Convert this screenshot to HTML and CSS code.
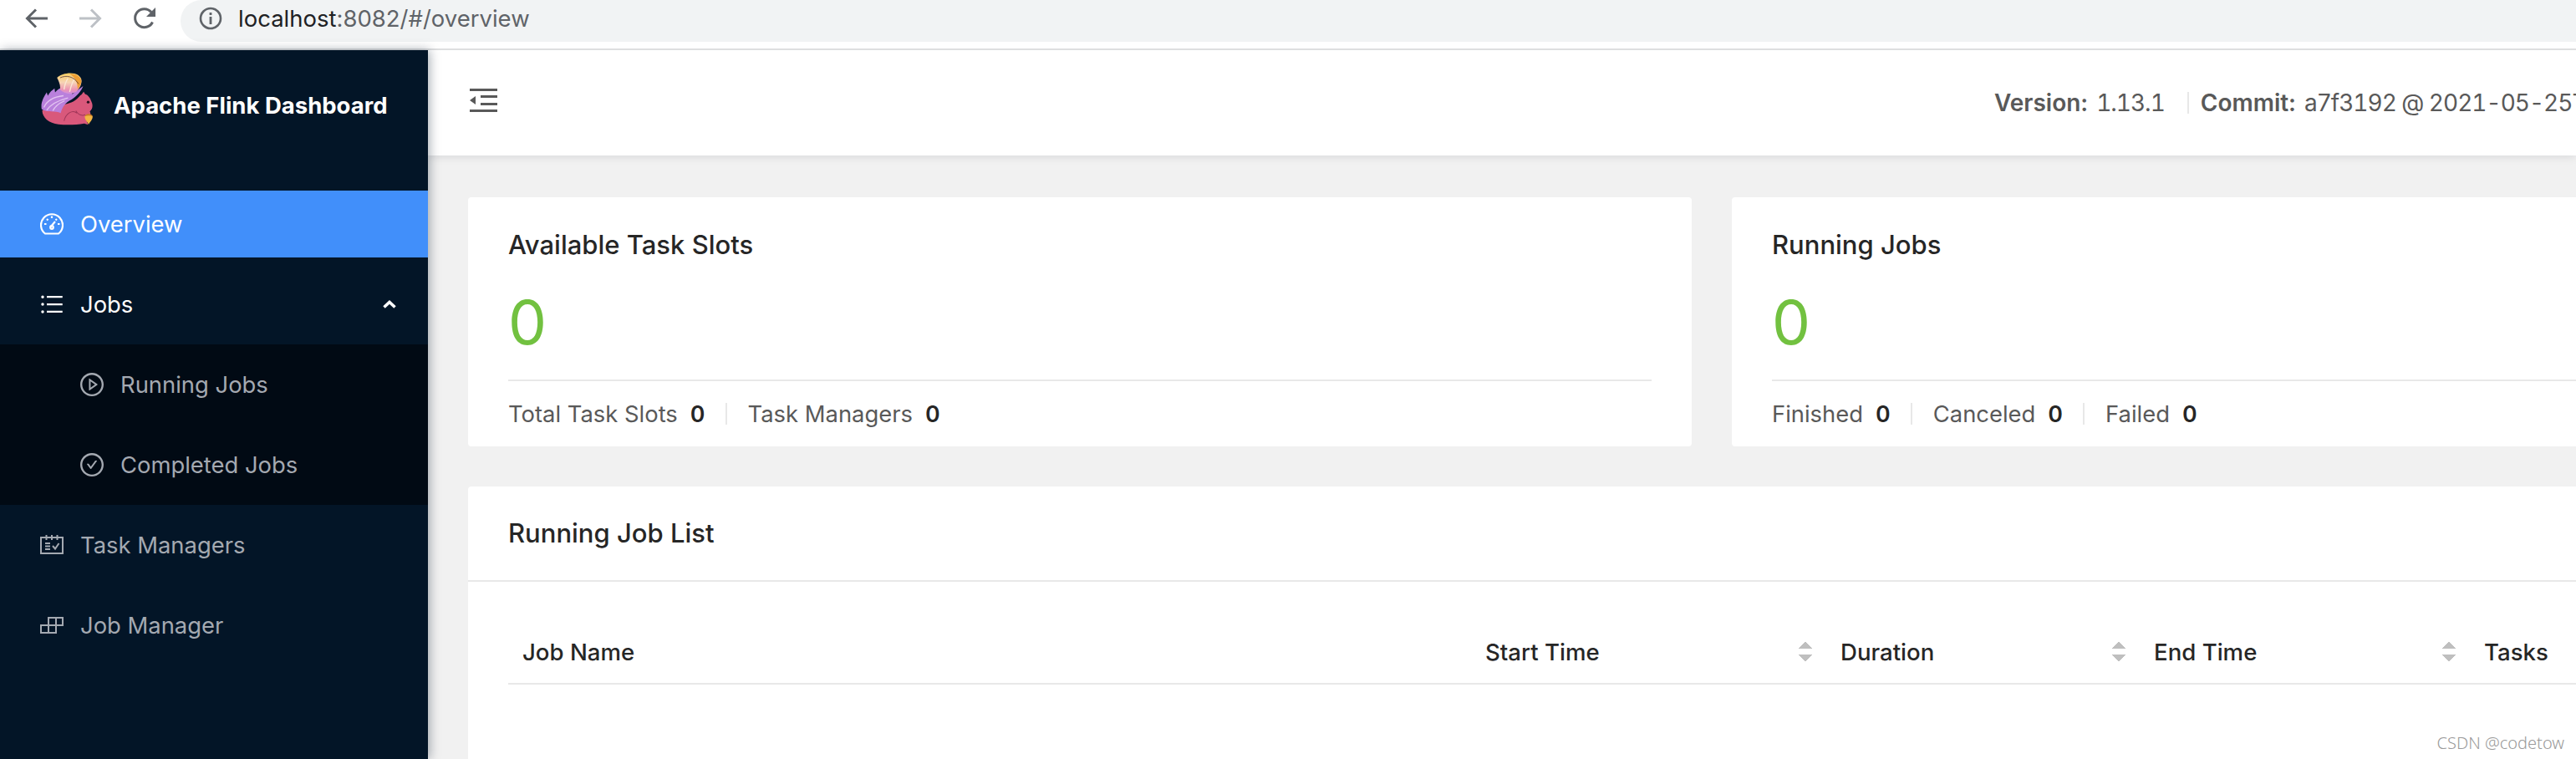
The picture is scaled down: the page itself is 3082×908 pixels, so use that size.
FILE: index.html
```html
<!DOCTYPE html>
<html lang="en">
<head>
<meta charset="utf-8">
<title>Apache Flink Dashboard</title>
<link rel="stylesheet" href="styles.css">
</head>
<body>
<div class="browser-bar">
  <svg class="nav-btn" width="28" height="28" viewBox="0 0 28 28"><path class="chrome-stroke" d="M27 14H3M13 3.500L2.500 14 13 24.500"/></svg>
  <svg class="nav-btn fwd" width="28" height="28" viewBox="0 0 28 28"><path class="chrome-stroke dim" d="M1 14H25M15 3.500L25.500 14 15 24.500"/></svg>
  <svg class="nav-btn reload" width="28" height="28" viewBox="0 0 28 28"><path class="chrome-stroke" d="M23.500 18.500A11 11 0 1 1 22 6.500"/><path class="chrome-fill" d="M27 1V12H16Z"/></svg>
  <div class="address">
    <svg width="28" height="28" viewBox="0 0 28 28"><circle cx="14" cy="14" r="12" fill="none" stroke="#5f6368" stroke-width="2.600"/><rect x="12.600" y="12" width="2.800" height="9" fill="#5f6368"/><rect x="12.600" y="7" width="2.800" height="3" fill="#5f6368"/></svg>
    <span class="url"><span class="host">localhost</span>:8082/#/overview</span>
  </div>
</div>
<div class="app">
  <aside class="sidebar">
    <div class="brand">
      <svg class="logo" width="62" height="63" viewBox="88 52 184 188">
        <defs>
          <linearGradient id="plume" x1="0" y1="0" x2="0" y2="1">
            <stop offset="0" stop-color="#f8cf62"/><stop offset=".45" stop-color="#f6d3b4"/><stop offset=".8" stop-color="#ec93b2"/><stop offset="1" stop-color="#cf8fe0"/>
          </linearGradient>
        </defs>
        <path fill="#d9587b" d="M92 186C92 212 116 232 150 236C180 240 215 238 242 233L256 238L250 222C262 214 268 200 262 190C272 182 274 168 268 156C264 142 254 130 245 128L240 120L232 130C222 136 216 150 196 158C160 170 120 176 92 186Z"/>
        <path fill="#b980dc" d="M90 182C86 160 96 140 108 122L112 134C118 122 128 114 136 108L138 122C146 112 156 106 164 104L200 128L238 100C232 118 214 138 196 148C176 158 164 172 158 196C140 186 108 196 90 182Z"/>
        <path fill="url(#plume)" d="M156 112C158 96 150 80 145 70C160 54 200 48 220 60C228 66 234 74 232 84C232 96 224 110 214 120C196 132 170 128 156 112Z"/>
        <path fill="#ee9f35" d="M190 56C210 54 232 66 232 84C230 96 224 104 218 112C220 90 210 70 190 56Z"/>
        <path fill="none" stroke="#e3c4f2" stroke-width="4" d="M98 176C108 152 132 138 168 134M108 186C122 164 146 152 184 142M130 188C136 174 150 162 172 152"/>
        <path fill="none" stroke="#fbe6d4" stroke-width="4" d="M170 112C172 96 176 84 184 72M190 120C194 102 198 88 206 76"/>
        <path fill="none" stroke="#3a1d2e" stroke-width="2" d="M156 70C178 60 204 64 222 92"/>
        <path fill="none" stroke="#9e3658" stroke-width="3" d="M212 188C222 204 236 206 246 202M170 224C176 198 200 182 216 196"/>
        <circle cx="256" cy="157" r="5" fill="#2a1020"/>
        <path fill="#f3b545" d="M244 208C248 198 268 198 272 208C272 220 264 226 258 236C252 226 244 220 244 208Z"/>
        <path fill="#c97a22" d="M244 208C248 196 268 196 272 208C264 204 252 204 244 208Z"/>
      </svg>
      <span class="brand-name">Apache Flink Dashboard</span>
    </div>
    <nav class="menu">
      <a class="item active">
        <svg class="ico" width="28" height="28" viewBox="0 0 28 28" fill="none" stroke="currentColor" stroke-width="2.200"><path d="M6 25.500H22A13 13 0 1 0 6 25.500Z"/><path d="M14 4.500V7M5 14H7.500M21 14H23.500M8 8L9.500 9.500M20 8L18.500 9.500M12.500 17.500L18 11"/><circle cx="14" cy="18" r="1.800"/></svg>
        <span>Overview</span>
      </a>
      <div class="group">
        <a class="item open">
          <svg class="ico" width="28" height="28" viewBox="64 64 896 896" fill="currentColor"><path d="M912 192H328c-4.400 0-8 3.600-8 8v56c0 4.400 3.600 8 8 8h584c4.400 0 8-3.600 8-8v-56c0-4.400-3.600-8-8-8zm0 284H328c-4.400 0-8 3.600-8 8v56c0 4.400 3.600 8 8 8h584c4.400 0 8-3.600 8-8v-56c0-4.400-3.600-8-8-8zm0 284H328c-4.400 0-8 3.600-8 8v56c0 4.400 3.600 8 8 8h584c4.400 0 8-3.600 8-8v-56c0-4.400-3.600-8-8-8zM104 228a56 56 0 1 0 112 0 56 56 0 1 0-112 0zm0 284a56 56 0 1 0 112 0 56 56 0 1 0-112 0zm0 284a56 56 0 1 0 112 0 56 56 0 1 0-112 0z"/></svg>
          <span>Jobs</span>
          <svg class="chev" width="18" height="12" viewBox="0 0 18 12"><path d="M2.500 9.500L9 3.500L15.500 9.500" fill="none" stroke="#fff" stroke-width="3.600"/></svg>
        </a>
        <div class="sub">
          <a class="item subitem">
            <svg class="ico" width="28" height="28" viewBox="64 64 896 896" fill="currentColor"><path d="M512 64C264.600 64 64 264.600 64 512s200.600 448 448 448 448-200.600 448-448S759.400 64 512 64zm0 820c-205.400 0-372-166.600-372-372s166.600-372 372-372 372 166.600 372 372-166.600 372-372 372z"/><path d="M719.400 499.100l-296.100-215A15.900 15.900 0 0 0 398 297v430c0 13.100 14.800 20.500 25.300 12.900l296.100-215a15.900 15.900 0 0 0 0-25.800zm-257.600 134V390.900L628.500 512 461.800 633.100z"/></svg>
            <span>Running Jobs</span>
          </a>
          <a class="item subitem">
            <svg class="ico" width="28" height="28" viewBox="64 64 896 896" fill="currentColor"><path d="M699 353h-46.900c-10.200 0-19.900 4.900-25.900 13.300L469 584.300l-71.200-98.800c-6-8.300-15.600-13.300-25.900-13.300H325c-6.500 0-10.300 7.400-6.500 12.700l124.600 172.800a31.800 31.800 0 0 0 51.700 0l210.600-292c3.900-5.300.1-12.700-6.400-12.700z"/><path d="M512 64C264.600 64 64 264.600 64 512s200.600 448 448 448 448-200.600 448-448S759.400 64 512 64zm0 820c-205.400 0-372-166.600-372-372s166.600-372 372-372 372 166.600 372 372-166.600 372-372 372z"/></svg>
            <span>Completed Jobs</span>
          </a>
        </div>
      </div>
      <a class="item">
        <svg class="ico" width="28" height="28" viewBox="0 0 28 28" fill="none" stroke="currentColor" stroke-width="2"><path d="M1 5H27V24H1Z"/><path d="M7.500 2V8M14 2V8M20.500 2V8M6 12H12M6 15.500H12M6 19H12M15 15L18 18.500L22.500 12"/></svg>
        <span>Task Managers</span>
      </a>
      <a class="item">
        <svg class="ico" width="28" height="28" viewBox="0 0 28 28" fill="none" stroke="currentColor" stroke-width="2"><path d="M1 14H19V23H1ZM10 14V23M10 14V5H27V14H19V5"/></svg>
        <span>Job Manager</span>
      </a>
    </nav>
  </aside>
  <main class="main">
    <header class="topbar">
      <svg class="toggle" width="33" height="28" viewBox="0 0 33 28"><path fill="#595959" d="M0 0H33V3H0ZM13 8H33V11H13ZM13 17H33V20H13ZM0 25H33V28H0ZM0 14L7 9V19Z"/></svg>
      <div class="meta">
        <span class="meta-item"><b>Version:</b> <span class="val">1.13.1</span></span>
        <i class="meta-sep"></i>
        <span class="meta-item"><b>Commit:</b> <span class="val">a7f3192 @ 2021-05-25T</span></span>
      </div>
    </header>
    <div class="content">
      <section class="card stat">
        <h2 class="stat-title">Available Task Slots</h2>
        <div class="stat-value">0</div>
        <div class="stat-foot">
          <span class="foot-item">Total Task Slots<b>0</b></span>
          <i class="foot-sep"></i>
          <span class="foot-item">Task Managers<b>0</b></span>
        </div>
      </section>
      <section class="card stat">
        <h2 class="stat-title">Running Jobs</h2>
        <div class="stat-value">0</div>
        <div class="stat-foot">
          <span class="foot-item">Finished<b>0</b></span>
          <i class="foot-sep"></i>
          <span class="foot-item">Canceled<b>0</b></span>
          <i class="foot-sep"></i>
          <span class="foot-item">Failed<b>0</b></span>
        </div>
      </section>
      <section class="card list">
        <h2 class="list-title">Running Job List</h2>
        <div class="list-body">
          <table class="jobs">
            <colgroup><col class="c-name"><col class="c-start"><col class="c-dur"><col class="c-end"><col class="c-tasks"></colgroup>
            <thead>
              <tr>
                <th>Job Name</th>
                <th><div class="th-in">Start Time<span class="sorter"></span></div></th>
                <th><div class="th-in">Duration<span class="sorter"></span></div></th>
                <th><div class="th-in">End Time<span class="sorter"></span></div></th>
                <th>Tasks</th>
              </tr>
            </thead>
          </table>
        </div>
      </section>
    </div>
  </main>
</div>
<div class="watermark">CSDN @codetow</div>
</body>
</html>
```
FILE: styles.css
```css
* { box-sizing: border-box; }
html, body { margin: 0; height: 908px; overflow: hidden; background: #fff; }
body { font-family: Inter, "Noto Sans", sans-serif; display: flex; flex-direction: column; position: relative; }
b { font-weight: 600; }

.browser-bar { height: 60px; flex: none; display: flex; align-items: flex-start; border-bottom: 2px solid #dedfe0; background: #fff; padding-left: 30px; }
.nav-btn { margin-top: 8px; flex: none; margin-right: 36px; }
.nav-btn.reload { margin-right: 29px; margin-left: 1px; }
.chrome-stroke { fill: none; stroke: #5f6368; stroke-width: 3; }
.chrome-stroke.dim { stroke: #bdc1c6; }
.chrome-fill { fill: #5f6368; }
.address { flex: 1; height: 50px; background: #f1f3f4; border-radius: 25px 0 0 25px; display: flex; align-items: center; padding: 0 0 6px 22px; }
.url { font-size: 27.5px; color: #5f6368; margin-left: 19px; line-height: 44px; }
.host { color: #202124; }

.app { flex: 1; display: flex; min-height: 0; }
.sidebar { width: 512px; flex: none; background: #031527; box-shadow: 2px 0 12px rgba(0,21,41,.35); position: relative; z-index: 2; }
.brand { height: 168px; display: flex; align-items: flex-start; padding: 27px 0 0 49px; }
.logo { flex: none; }
.brand-name { font-size: 27.5px; font-weight: 700; color: #fff; margin: 21px 0 0 25px; line-height: 36px; white-space: nowrap; }

.menu { display: flex; flex-direction: column; }
.item { height: 80px; display: flex; align-items: center; padding-left: 48px; font-size: 27.4px; color: #a4a9b1; gap: 20px; }
.item.active { background: #418ffa; color: #fff; margin-bottom: 16px; }
.menu > .item:not(.active) { margin: 8px 0; }
.group { margin-top: -16px; }
.item.open { color: #fff; height: 104px; padding-top: 8px; }
.chev { margin-left: auto; margin-right: 37px; }
.sub { background: #010a14; }
.subitem { height: 96px; padding-left: 96px; }

.main { flex: 1; min-width: 0; background: #f1f1f1; overflow: hidden; }
.topbar { height: 126px; background: #fff; display: flex; align-items: center; padding-left: 50px; box-shadow: 0 2px 10px rgba(0,21,41,.1); position: relative; }
.toggle { flex: none; transform: translateY(-3px); }
.meta { display: flex; align-items: center; margin-left: 1791px; white-space: nowrap; font-size: 28px; color: #595959; }
.meta-sep { width: 2px; height: 26px; background: #e8e8e8; margin: 0 14px 0 27px; }
.val { font-variant-numeric: tabular-nums; letter-spacing: -1px; margin-left: 2px; }

.content { display: grid; grid-template-columns: 1464px 1464px; gap: 48px; padding: 50px 48px; width: 3024px; }
.card { background: #fff; border-radius: 4px; }
.stat { height: 298px; padding: 0 48px; display: flex; flex-direction: column; }
.stat-title { margin: 38px 0 0; font-size: 31px; line-height: 38px; font-weight: 500; color: #262626; }
.stat-value { font-size: 73px; line-height: 92px; color: #72c140; margin-top: 28px; height: 116px; border-bottom: 2px solid #e8e8e8; }
.stat-foot { display: flex; align-items: center; flex: 1; font-size: 27.4px; color: #595959; }
.foot-item b { color: #262626; margin-left: 15px; font-variant-numeric: tabular-nums; }
.foot-sep { width: 2px; height: 26px; background: #e8e8e8; margin: 0 25px 0 24px; }

.list { grid-column: 1 / -1; height: 500px; }
.list-title { margin: 0; font-size: 31px; font-weight: 500; color: #262626; height: 114px; line-height: 112px; padding-left: 48px; border-bottom: 2px solid #e8e8e8; }
.list-body { padding: 0 48px; }
.jobs { table-layout: fixed; width: 2880px; border-collapse: collapse; }
.c-name { width: 1153px; }
.c-start { width: 425px; }
.c-dur { width: 375px; }
.c-end { width: 395px; }
.jobs th { height: 122px; padding: 66px 16px 20px; font-size: 27.6px; line-height: 34px; font-weight: 500; color: #262626; text-align: left; border-bottom: 2px solid #e8e8e8; vertical-align: middle; }
.jobs th:first-child { padding-left: 17px; }
.th-in { display: flex; align-items: center; justify-content: space-between; padding-right: 2px; }
.sorter { width: 16px; height: 25px; flex: none; background:
  linear-gradient(to top left, #bfbfbf 50%, transparent 50%) left top / 8px 9px no-repeat,
  linear-gradient(to top right, #bfbfbf 50%, transparent 50%) right top / 8px 9px no-repeat,
  linear-gradient(to bottom left, #bfbfbf 50%, transparent 50%) left bottom / 8px 9px no-repeat,
  linear-gradient(to bottom right, #bfbfbf 50%, transparent 50%) right bottom / 8px 9px no-repeat; }

.watermark { position: absolute; right: 14px; bottom: 6px; font-family: "Noto Sans", sans-serif; font-size: 20px; font-weight: 300; color: #9a9a9a; line-height: 26px; }
```
